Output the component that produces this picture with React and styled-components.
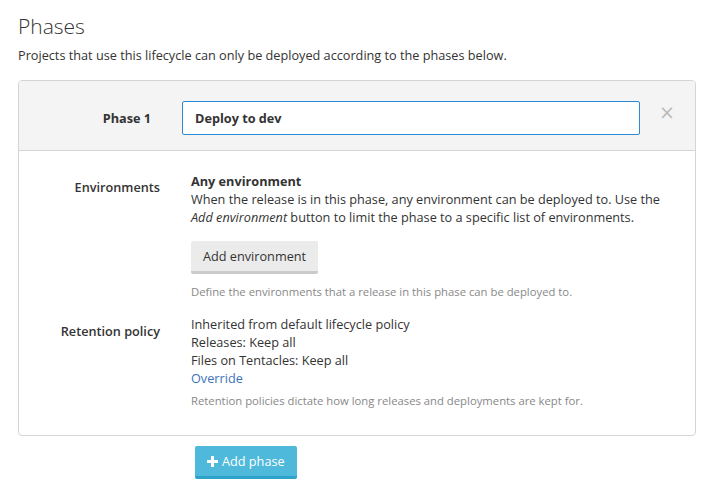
import React from "react";
import styled, { createGlobalStyle } from "styled-components";

const Global = createGlobalStyle`
  html, body { margin: 0; padding: 0; background: #fff; }
  body {
    font-family: "Open Sans", "Noto Sans", "Liberation Sans", sans-serif;
    font-size: 12.7px;
    color: #333;
  }
  * { box-sizing: border-box; }
`;

const Page = styled.div`
  padding: 11px 16px 0 18px;
  width: 712px;
`;

const Title = styled.h2`
  margin: 0;
  font-size: 21px;
  font-weight: 300;
  line-height: 30px;
  color: #333;
`;

const Lead = styled.p`
  margin: 5px 0 0;
  line-height: 18px;
`;

const Panel = styled.div`
  margin-top: 16px;
  width: 678px;
  border: 1px solid #d5d5d5;
  border-radius: 4px;
  overflow: hidden;
`;

const PanelHeader = styled.div`
  display: grid;
  grid-template-columns: 132px 458px 1fr;
  column-gap: 31px;
  align-items: center;
  height: 70px;
  padding-top: 4px;
  background: #f4f4f4;
  border-bottom: 1px solid #d5d5d5;
`;

const HeaderLabel = styled.label`
  text-align: right;
  font-weight: 700;
`;

const NameInput = styled.input`
  height: 34px;
  width: 100%;
  border: 1px solid #2b8ad3;
  border-radius: 2px;
  padding: 0 12px;
  font: inherit;
  font-weight: 700;
  color: #333;
  background: #fff;
  outline: none;
`;

const Close = styled.button`
  justify-self: start;
  margin: -10px 0 0 -12px;
  border: 0;
  background: none;
  padding: 0;
  font-size: 19px;
  line-height: 1;
  color: #bbb;
  font-family: "DejaVu Sans", sans-serif;
  cursor: pointer;
`;

const PanelBody = styled.div`
  padding: 21px 0 25px;
  display: grid;
  grid-template-columns: 141px 1fr;
  column-gap: 31px;
`;

const FieldLabel = styled.div`
  text-align: right;
  font-weight: 600;
  line-height: 18px;
  padding-top: ${(p) => p.$offset || 0}px;
  margin-top: ${(p) => p.$gap || 0}px;
`;

const FieldContent = styled.div`
  line-height: 18px;
  margin-top: ${(p) => p.$gap || 0}px;
  padding-right: 18px;
`;

const Strong = styled.div`
  font-weight: 700;
`;

const Text = styled.div``;

const Link = styled.a`
  color: #3d73b9;
  text-decoration: none;
  cursor: pointer;
`;

const Help = styled.div`
  color: #888;
  font-size: 11.3px;
  line-height: 18px;
  margin-top: ${(p) => p.$gap || 0}px;
`;

const GreyButton = styled.button`
  display: block;
  margin-top: 15px;
  height: 33px;
  padding: 0 12px;
  border: 0;
  border-bottom: 3px solid #cbcbcb;
  border-radius: 2px;
  background: #ebebeb;
  font: inherit;
  color: #333;
  cursor: pointer;
`;

const AddPhase = styled.button`
  display: flex;
  align-items: center;
  gap: 4px;
  margin: 10px 0 0 177px;
  height: 33px;
  padding: 0 12px;
  border: 0;
  border-bottom: 3px solid #2ba3cb;
  border-radius: 2px;
  background: #4eb9da;
  color: #fff;
  font: inherit;
  cursor: pointer;
`;

const PlusIcon = () => (
  <svg width="11" height="11" viewBox="0 0 11 11" aria-hidden="true">
    <path d="M4 0h3v4h4v3H7v4H4V7H0V4h4z" fill="#fff" />
  </svg>
);

export default function App() {
  return (
    <>
      <Global />
      <Page>
        <Title>Phases</Title>
        <Lead>
          Projects that use this lifecycle can only be deployed according to the phases below.
        </Lead>
        <Panel>
          <PanelHeader>
            <HeaderLabel>Phase 1</HeaderLabel>
            <NameInput defaultValue="Deploy to dev" />
            <Close aria-label="Remove">×</Close>
          </PanelHeader>
          <PanelBody>
            <FieldLabel $offset={6}>Environments</FieldLabel>
            <FieldContent>
              <Strong>Any environment</Strong>
              <Text>
                When the release is in this phase, any environment can be deployed to. Use the{" "}
                <em>Add environment</em> button to limit the phase to a specific list of environments.
              </Text>
              <GreyButton>Add environment</GreyButton>
              <Help $gap={9}>Define the environments that a release in this phase can be deployed to.</Help>
            </FieldContent>
            <FieldLabel $offset={7} $gap={14}>Retention policy</FieldLabel>
            <FieldContent $gap={14}>
              <Text>Inherited from default lifecycle policy</Text>
              <Text>Releases: Keep all</Text>
              <Text>Files on Tentacles: Keep all</Text>
              <Link>Override</Link>
              <Help $gap={5}>Retention policies dictate how long releases and deployments are kept for.</Help>
            </FieldContent>
          </PanelBody>
        </Panel>
        <AddPhase>
          <PlusIcon />
          Add phase
        </AddPhase>
      </Page>
    </>
  );
}
